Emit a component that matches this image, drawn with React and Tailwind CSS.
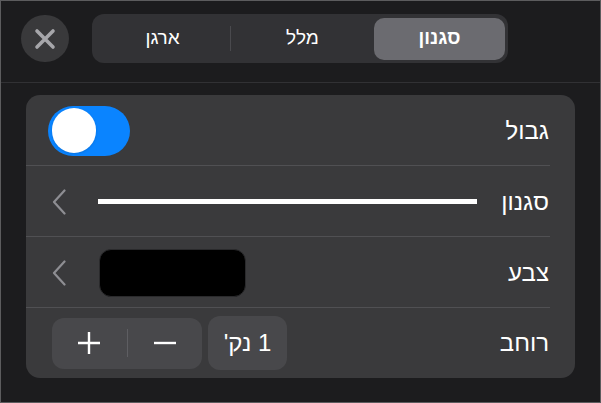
const font = { fontFamily: '"Liberation Sans", "Noto Sans", sans-serif' };

const Chevron = () => (
  <svg width="14" height="26" viewBox="0 0 14 26" className="ml-[4px] shrink-0">
    <polyline
      points="12.5,1.5 2,13 12.5,24.5"
      fill="none"
      stroke="#8e8e93"
      strokeWidth="2.2"
      strokeLinecap="round"
      strokeLinejoin="round"
    />
  </svg>
);

const Row = ({ label, children, last, h = 'h-[71px]' }) => (
  <div className={`relative flex ${h} items-center pl-[22px] pr-[26px]`}>
    <div className="flex flex-1 items-center">{children}</div>
    <span dir="rtl" className="text-[24px] text-white">
      {label}
    </span>
    {!last && <div className="absolute bottom-0 left-0 right-[25px] h-px bg-[#505053]" />}
  </div>
);

export default function App() {
  return (
    <div
      className="flex h-[403px] w-[601px] flex-col border border-[#5c5c5e] bg-[#1c1c1e]"
      style={font}
    >
      {/* Header */}
      <div className="flex h-[82px] items-start gap-[23px] border-b border-[#313134] pl-[20px] pt-[13px]">
        <button className="mt-px flex h-[47px] w-[48px] items-center justify-center rounded-full bg-[#39393b]">
          <svg width="22" height="22" viewBox="0 0 22 22">
            <path
              d="M3 3 L19 19 M19 3 L3 19"
              stroke="#a6a6aa"
              strokeWidth="3.6"
              strokeLinecap="round"
            />
          </svg>
        </button>
        <div className="flex h-[49px] w-[416px] items-center rounded-[12px] bg-[#323235] p-[3px] text-[19px] text-white">
          <div className="flex w-[135px] items-center justify-center" dir="rtl">ארגן</div>
          <div className="h-[25px] w-px bg-[#4a4a4e]" />
          <div className="flex flex-1 items-center justify-center" dir="rtl">מלל</div>
          <div
            className="flex h-[42px] w-[131px] items-center justify-center rounded-[10px] bg-[#6b6b70] font-bold"
            dir="rtl"
          >
            סגנון
          </div>
        </div>
      </div>

      {/* Card */}
      <div className="ml-[25px] mt-[12px] w-[549px] rounded-[14px] bg-[#3a3a3c]">
        <Row label="גבול">
          <div className="flex h-[50px] w-[82px] items-center rounded-full bg-[#0a84ff] pl-[4px]">
            <div className="h-[45px] w-[44px] rounded-full bg-white shadow" />
          </div>
        </Row>
        <Row label="סגנון">
          <Chevron />
          <div className="ml-[32px] h-[5px] w-[379px] bg-white" />
        </Row>
        <Row label="צבע">
          <Chevron />
          <div className="ml-[33px] h-[48px] w-[147px] rounded-[12px] border border-[#2a2a2c] bg-black" />
        </Row>
        <Row label="רוחב" last h="h-[70px]">
          <div className="ml-[4px] flex h-[51px] w-[150px] items-center rounded-[12px] bg-[#48484b]">
            <div className="flex flex-1 items-center justify-center">
              <svg width="24" height="24" viewBox="0 0 24 24">
                <path d="M12 1 V23 M1 12 H23" stroke="white" strokeWidth="2.4" />
              </svg>
            </div>
            <div className="h-[28px] w-px bg-[#5e5e62]" />
            <div className="flex flex-1 items-center justify-center">
              <svg width="24" height="24" viewBox="0 0 24 24">
                <path d="M1 12 H23" stroke="white" strokeWidth="2.4" />
              </svg>
            </div>
          </div>
          <div
            dir="rtl"
            className="ml-[6px] flex h-[54px] w-[79px] items-center justify-center rounded-[12px] bg-[#48484b] text-[24px] text-white"
          >
            1 נק'
          </div>
        </Row>
      </div>
    </div>
  );
}
